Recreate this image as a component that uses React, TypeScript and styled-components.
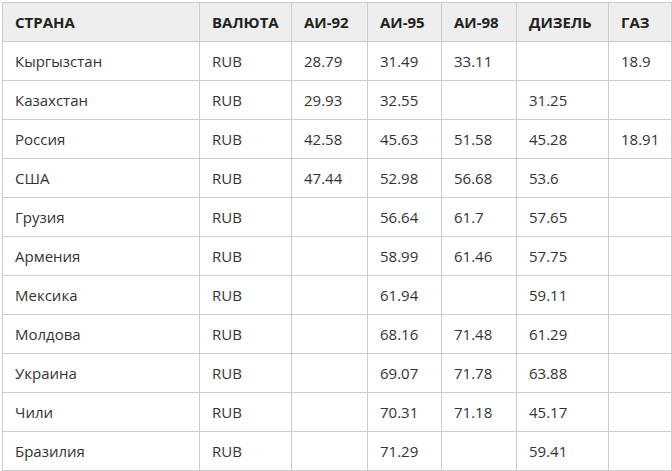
import React from 'react';
import styled, { createGlobalStyle } from 'styled-components';

const GlobalStyle = createGlobalStyle`
  html, body {
    margin: 0;
    padding: 0;
    background: #fff;
  }
  body {
    font-family: 'Open Sans', 'Liberation Sans', sans-serif;
  }
`;

const PageWrapper = styled.div`
  padding: 2px 0 0 2px;
`;

const PriceTable = styled.table`
  width: 669px;
  table-layout: fixed;
  border-collapse: collapse;
  font-size: 15px;
  color: #333;
`;

const HeadCell = styled.th`
  height: 38px;
  padding: 0 0 0 12px;
  border: 1px solid #cccccc;
  background: #eeeeee;
  color: #222;
  font-weight: 700;
  text-align: left;
  text-transform: uppercase;
  vertical-align: middle;
  white-space: nowrap;
`;

const Cell = styled.td`
  height: 38px;
  padding: 0 0 0 12px;
  border: 1px solid #cccccc;
  vertical-align: middle;
  white-space: nowrap;
`;

const columns = [
  { title: 'Страна', width: 197 },
  { title: 'Валюта', width: 92 },
  { title: 'АИ-92', width: 76 },
  { title: 'АИ-95', width: 74 },
  { title: 'АИ-98', width: 75 },
  { title: 'Дизель', width: 92 },
  { title: 'Газ', width: 63 },
];

const rows: string[][] = [
  ['Кыргызстан', 'RUB', '28.79', '31.49', '33.11', '', '18.9'],
  ['Казахстан', 'RUB', '29.93', '32.55', '', '31.25', ''],
  ['Россия', 'RUB', '42.58', '45.63', '51.58', '45.28', '18.91'],
  ['США', 'RUB', '47.44', '52.98', '56.68', '53.6', ''],
  ['Грузия', 'RUB', '', '56.64', '61.7', '57.65', ''],
  ['Армения', 'RUB', '', '58.99', '61.46', '57.75', ''],
  ['Мексика', 'RUB', '', '61.94', '', '59.11', ''],
  ['Молдова', 'RUB', '', '68.16', '71.48', '61.29', ''],
  ['Украина', 'RUB', '', '69.07', '71.78', '63.88', ''],
  ['Чили', 'RUB', '', '70.31', '71.18', '45.17', ''],
  ['Бразилия', 'RUB', '', '71.29', '', '59.41', ''],
];

const App: React.FC = () => {
  return (
    <PageWrapper>
      <GlobalStyle />
      <PriceTable>
        <colgroup>
          {columns.map((col) => (
            <col key={col.title} style={{ width: col.width }} />
          ))}
        </colgroup>
        <thead>
          <tr>
            {columns.map((col) => (
              <HeadCell key={col.title}>{col.title}</HeadCell>
            ))}
          </tr>
        </thead>
        <tbody>
          {rows.map((row) => (
            <tr key={row[0]}>
              {row.map((value, i) => (
                <Cell key={i}>{value}</Cell>
              ))}
            </tr>
          ))}
        </tbody>
      </PriceTable>
    </PageWrapper>
  );
};

export default App;
